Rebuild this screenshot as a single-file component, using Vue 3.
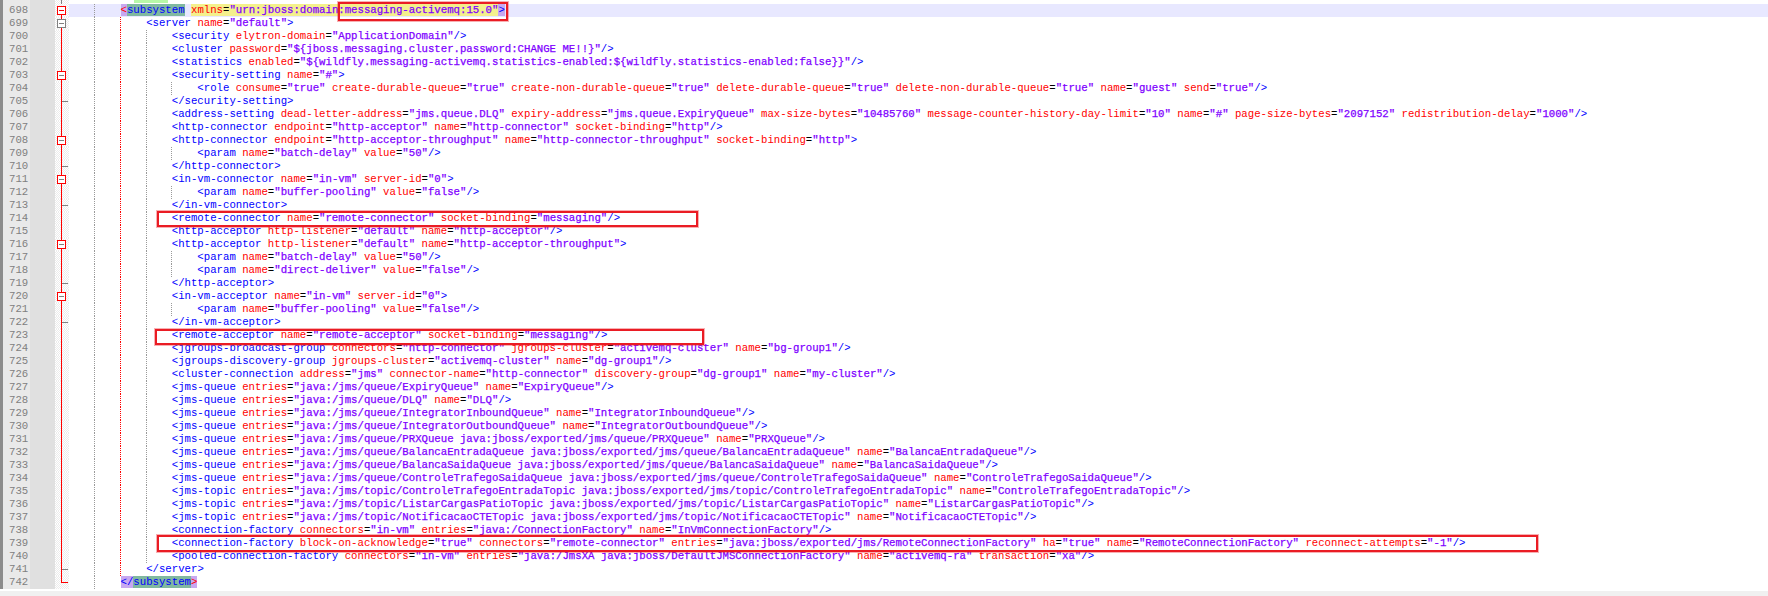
<script setup>
const src = [
  [8, '<subsystem xmlns="urn:jboss:domain:messaging-activemq:15.0">'],
  [12, '<server name="default">'],
  [16, '<security elytron-domain="ApplicationDomain"/>'],
  [16, '<cluster password="${jboss.messaging.cluster.password:CHANGE ME!!}"/>'],
  [16, '<statistics enabled="${wildfly.messaging-activemq.statistics-enabled:${wildfly.statistics-enabled:false}}"/>'],
  [16, '<security-setting name="#">'],
  [20, '<role consume="true" create-durable-queue="true" create-non-durable-queue="true" delete-durable-queue="true" delete-non-durable-queue="true" name="guest" send="true"/>'],
  [16, '</security-setting>'],
  [16, '<address-setting dead-letter-address="jms.queue.DLQ" expiry-address="jms.queue.ExpiryQueue" max-size-bytes="10485760" message-counter-history-day-limit="10" name="#" page-size-bytes="2097152" redistribution-delay="1000"/>'],
  [16, '<http-connector endpoint="http-acceptor" name="http-connector" socket-binding="http"/>'],
  [16, '<http-connector endpoint="http-acceptor-throughput" name="http-connector-throughput" socket-binding="http">'],
  [20, '<param name="batch-delay" value="50"/>'],
  [16, '</http-connector>'],
  [16, '<in-vm-connector name="in-vm" server-id="0">'],
  [20, '<param name="buffer-pooling" value="false"/>'],
  [16, '</in-vm-connector>'],
  [16, '<remote-connector name="remote-connector" socket-binding="messaging"/>'],
  [16, '<http-acceptor http-listener="default" name="http-acceptor"/>'],
  [16, '<http-acceptor http-listener="default" name="http-acceptor-throughput">'],
  [20, '<param name="batch-delay" value="50"/>'],
  [20, '<param name="direct-deliver" value="false"/>'],
  [16, '</http-acceptor>'],
  [16, '<in-vm-acceptor name="in-vm" server-id="0">'],
  [20, '<param name="buffer-pooling" value="false"/>'],
  [16, '</in-vm-acceptor>'],
  [16, '<remote-acceptor name="remote-acceptor" socket-binding="messaging"/>'],
  [16, '<jgroups-broadcast-group connectors="http-connector" jgroups-cluster="activemq-cluster" name="bg-group1"/>'],
  [16, '<jgroups-discovery-group jgroups-cluster="activemq-cluster" name="dg-group1"/>'],
  [16, '<cluster-connection address="jms" connector-name="http-connector" discovery-group="dg-group1" name="my-cluster"/>'],
  [16, '<jms-queue entries="java:/jms/queue/ExpiryQueue" name="ExpiryQueue"/>'],
  [16, '<jms-queue entries="java:/jms/queue/DLQ" name="DLQ"/>'],
  [16, '<jms-queue entries="java:/jms/queue/IntegratorInboundQueue" name="IntegratorInboundQueue"/>'],
  [16, '<jms-queue entries="java:/jms/queue/IntegratorOutboundQueue" name="IntegratorOutboundQueue"/>'],
  [16, '<jms-queue entries="java:/jms/queue/PRXQueue java:jboss/exported/jms/queue/PRXQueue" name="PRXQueue"/>'],
  [16, '<jms-queue entries="java:/jms/queue/BalancaEntradaQueue java:jboss/exported/jms/queue/BalancaEntradaQueue" name="BalancaEntradaQueue"/>'],
  [16, '<jms-queue entries="java:/jms/queue/BalancaSaidaQueue java:jboss/exported/jms/queue/BalancaSaidaQueue" name="BalancaSaidaQueue"/>'],
  [16, '<jms-queue entries="java:/jms/queue/ControleTrafegoSaidaQueue java:jboss/exported/jms/queue/ControleTrafegoSaidaQueue" name="ControleTrafegoSaidaQueue"/>'],
  [16, '<jms-topic entries="java:/jms/topic/ControleTrafegoEntradaTopic java:jboss/exported/jms/topic/ControleTrafegoEntradaTopic" name="ControleTrafegoEntradaTopic"/>'],
  [16, '<jms-topic entries="java:/jms/topic/ListarCargasPatioTopic java:jboss/exported/jms/topic/ListarCargasPatioTopic" name="ListarCargasPatioTopic"/>'],
  [16, '<jms-topic entries="java:/jms/topic/NotificacaoCTETopic java:jboss/exported/jms/topic/NotificacaoCTETopic" name="NotificacaoCTETopic"/>'],
  [16, '<connection-factory connectors="in-vm" entries="java:/ConnectionFactory" name="InVmConnectionFactory"/>'],
  [16, '<connection-factory block-on-acknowledge="true" connectors="remote-connector" entries="java:jboss/exported/jms/RemoteConnectionFactory" ha="true" name="RemoteConnectionFactory" reconnect-attempts="-1"/>'],
  [16, '<pooled-connection-factory connectors="in-vm" entries="java:/JmsXA java:jboss/DefaultJMSConnectionFactory" name="activemq-ra" transaction="xa"/>'],
  [12, '</server>'],
  [8, '</subsystem>'],
]

const openers = new Set([699, 703, 708, 711, 716, 720])
const closers = new Set([705, 710, 713, 719, 722, 741])

function tokenize(text) {
  const re = /(<\/?|\/?>)|([\w-]+)(?==)|(=)|("[^"]*")|([\w-]+)|(\s+)/g
  const out = []
  let m
  while ((m = re.exec(text))) {
    const kind = m[1] ? 'br' : m[2] ? 'attr' : m[3] ? 'eq' : m[4] ? 'val' : m[5] ? 'tag' : 'sp'
    out.push({ text: m[0], kind, mark: '' })
  }
  return out
}

const lines = src.map(([indent, text], i) => {
  const no = 698 + i
  const tokens = tokenize(text)
  if (no === 698) {
    tokens.forEach((t) => {
      if (t.kind === 'tag') t.mark = 'm-tag'
      if (t.kind === 'attr' || t.kind === 'eq' || t.kind === 'val') t.mark = 'm-yellow'
    })
    tokens[0].mark = 'm-br m-red'
    tokens[tokens.length - 1].mark = 'm-br'
  }
  if (no === 742) {
    tokens[0].mark = 'm-br'
    tokens[1].mark = 'm-tag'
    tokens[2].mark = 'm-br m-red'
  }
  const guides = []
  for (let c = 4; c < indent; c += 4) {
    guides.push(c === 8 && no > 698 && no < 742 ? 'guide block' : 'guide')
  }
  const rest = indent - guides.length * 4
  return {
    no,
    tokens,
    guides,
    rest,
    current: no === 698,
    fold: no === 698 ? 'top' : openers.has(no) ? (no === 699 ? 'open first' : 'open') : closers.has(no) ? 'close' : no === 742 ? 'end' : 'line',
  }
})
</script>

<template>
  <div class="editor">
    <div class="stub">
      <div class="num"></div>
      <div class="fold-stub"><i class="stub-line"></i></div>
      <div class="code"><span class="stub-mark"></span></div>
    </div>
    <div v-for="l in lines" :key="l.no" class="row">
      <div class="num">{{ l.no }}</div>
      <div class="fold" :class="l.fold">
        <span class="box"><i></i></span>
      </div>
      <div class="code" :class="{ current: l.current }">
        <span v-for="(g, i) in l.guides" :key="i" :class="g"></span><span class="rest">{{ ' '.repeat(l.rest) }}</span><span
          v-for="(t, i) in l.tokens" :key="'t' + i" :class="[t.kind, t.mark]">{{ t.text }}</span>
      </div>
    </div>
    <div class="statusbar"></div>
    <div class="mark mark-a"></div>
    <div class="mark mark-b"></div>
    <div class="mark mark-c"></div>
    <div class="mark mark-d"></div>
  </div>
</template>

<style>
html, body { margin: 0; background: #fff; overflow: hidden; }
</style>

<style scoped>
.editor {
  position: relative;
  width: 1768px;
  height: 596px;
  overflow: hidden;
  background: #fff;
  display: flex;
  flex-direction: column;
  font-family: "Liberation Mono", "Courier New", monospace;
  font-size: 10.685px;
  line-height: 13px;
}
.stub, .row {
  display: flex;
  flex: none;
}
.stub { height: 4px; }
.row { height: 13px; }
.num {
  flex: none;
  box-sizing: border-box;
  width: 55px;
  padding-left: 6px;
  border-left: 3px solid #8c8c8c;
  background: linear-gradient(90deg, #e9e9e9 0, #e9e9e9 27px, #e0e0e0 27px);
  color: #808080;
}
.fold, .fold-stub {
  flex: none;
  width: 14px;
  position: relative;
  background-color: #fff;
  background-image: repeating-conic-gradient(#ececec 0 25%, #fff 0 50%);
  background-size: 2px 2px;
}
.stub-line {
  position: absolute;
  left: 6px;
  top: 0;
  bottom: 0;
  width: 1px;
  background: #808080;
}
.fold::before {
  content: "";
  position: absolute;
  left: 6px;
  top: 0;
  bottom: 0;
  width: 1px;
  background: #f00;
}
.fold.top::before { top: 10px; }
.fold.end::before { bottom: 6px; }
.fold .box { display: none; }
.fold.top .box, .fold.open .box {
  display: block;
  position: absolute;
  left: 2px;
  top: 2px;
  width: 7px;
  height: 7px;
  border: 1px solid #f00;
  background: #fff;
  z-index: 1;
}
.fold.first .box { border-color: #808080; }
.box i {
  position: absolute;
  left: 1px;
  right: 1px;
  top: 3px;
  height: 1px;
  background: #808080;
}
.fold.top .box i { background: #f00; }
.fold.close::after, .fold.end::after {
  content: "";
  position: absolute;
  left: 7px;
  top: 6px;
  width: 6px;
  height: 1px;
  background: #808080;
}
.fold.end::after { background: #f00; }
.code {
  flex: 1;
  min-width: 0;
  white-space: pre;
  padding-left: 0.3px;
  position: relative;
  overflow: hidden;
}
.code.current { background: #e8e8ff; }
.guide {
  display: inline-block;
  box-sizing: border-box;
  width: 4ch;
  height: 13px;
  vertical-align: top;
  background: repeating-linear-gradient(180deg, #9a9a9a 0 1px, transparent 1px 2px) 25px 0 / 1px 100% no-repeat;
}
.guide.block {
  background-image: repeating-linear-gradient(180deg, #f00 0 1px, transparent 1px 2px);
}
.rest { white-space: pre; }
.br, .tag { color: #0000ff; }
.attr { color: #ff0000; }
.eq { color: #000; }
.val { color: #8000ff; -webkit-text-stroke: 0.25px #8000ff; }
.m-red { color: #ff0000; }
.m-br { background: #c8a8f0; }
.m-tag { background: #80b8a0; }
.m-yellow { background: #f4f08c; }
.stub-mark {
  display: block;
  width: 34px;
  height: 3px;
  margin-left: 65px;
  background: #b8f8a8;
}
.statusbar {
  flex: 1;
  margin-top: 2px;
  background: #f0f0f0;
}
.mark {
  position: absolute;
  box-sizing: border-box;
  border: 2px solid #ea1c24;
  box-shadow: 0 0 0 1px rgba(234, 28, 36, 0.35);
}
.mark-a { left: 338px; top: 2px; width: 170px; height: 19px; }
.mark-b { left: 157px; top: 211px; width: 541px; height: 16px; }
.mark-c { left: 155px; top: 329px; width: 549px; height: 16px; }
.mark-d { left: 157px; top: 535px; width: 1381px; height: 17px; }
</style>
